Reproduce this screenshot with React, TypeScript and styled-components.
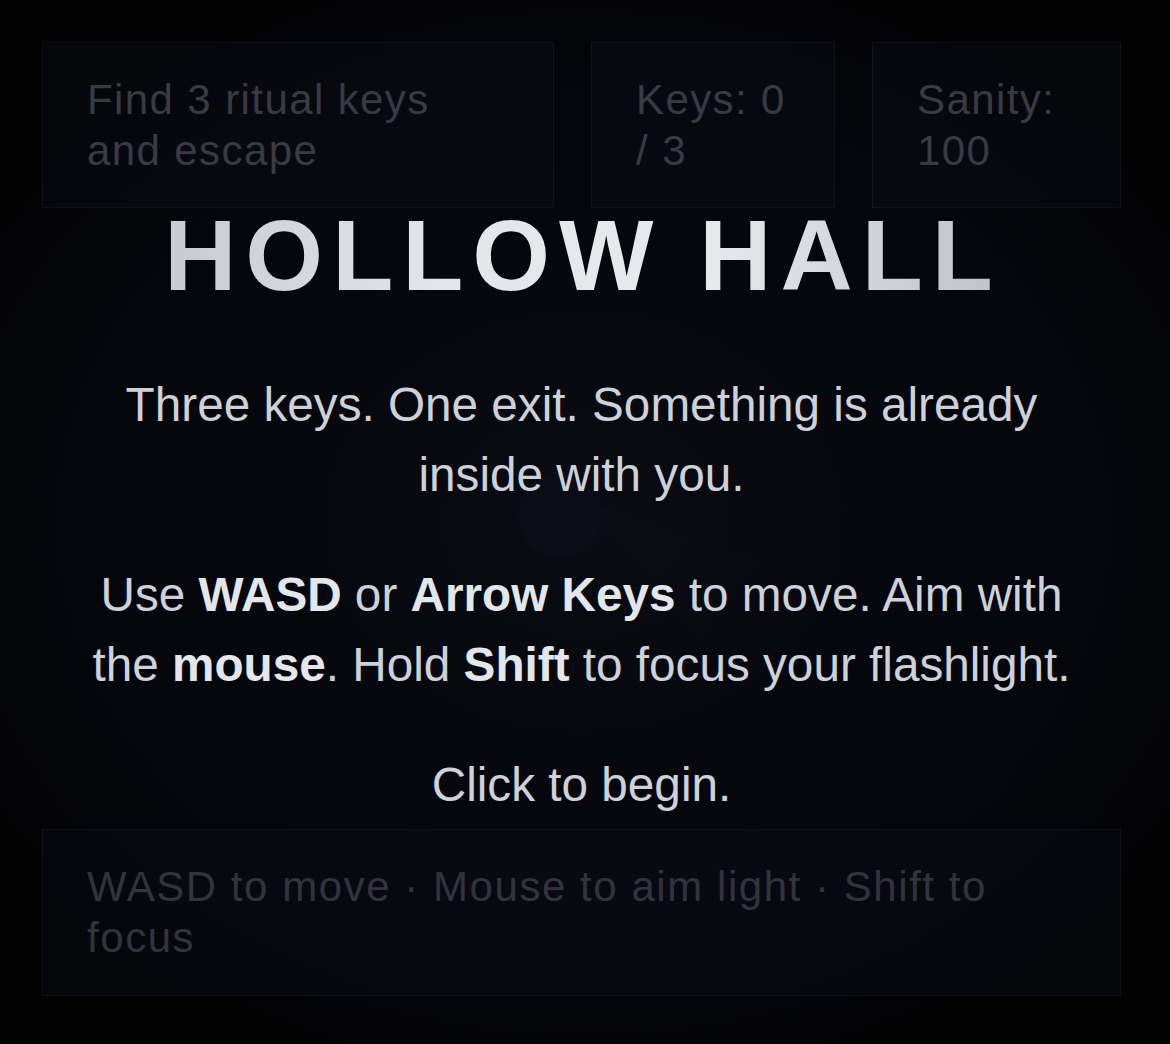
import styled, { createGlobalStyle } from 'styled-components';

const GlobalStyle = createGlobalStyle`
  html, body {
    margin: 0;
    padding: 0;
    background: #040509;
  }
  body {
    font-family: "Liberation Sans", Arial, sans-serif;
  }
`;

const Stage = styled.div`
  position: relative;
  width: 1170px;
  height: 1044px;
  box-sizing: border-box;
  padding: 42px 49px 48px 42px;
  display: flex;
  flex-direction: column;
  justify-content: space-between;
  overflow: hidden;
  background:
    radial-gradient(ellipse 60% 55% at 50% 50%, #0a0c13 0%, #06070d 55%, #040509 85%, #020203 100%);
`;

const Scene = styled.svg`
  position: absolute;
  inset: 0;
  pointer-events: none;
`;

const TopBar = styled.div`
  display: grid;
  grid-template-columns: 512px 244px 249px;
  gap: 37px;
`;

const Panel = styled.div`
  box-sizing: border-box;
  border: 1px solid rgba(150, 160, 190, 0.07);
  background: rgba(12, 15, 24, 0.4);
  padding: 31px 44px;
  font-size: 42px;
  line-height: 51px;
  letter-spacing: 1.4px;
  color: #383b43;
`;

const BottomPanel = styled(Panel)`
  width: 1079px;
  height: 167px;
  letter-spacing: 1.55px;
  color: #31343c;
`;

const Overlay = styled.div`
  position: absolute;
  inset: 0;
  padding: 0 49px 27px 42px;
  display: flex;
  flex-direction: column;
  align-items: center;
  justify-content: center;
  text-align: center;
`;

const Title = styled.h1`
  margin: 0 0 57px;
  font-size: 100px;
  line-height: 115px;
  font-weight: 700;
  letter-spacing: 9px;
  padding-left: 3px;
  background: linear-gradient(90deg, #c8cacf 0%, #e4e6ea 35%, #e7e9ed 65%, #c0c2c7 100%);
  -webkit-background-clip: text;
  background-clip: text;
  color: transparent;
`;

const Text = styled.p<{ $gap?: number }>`
  margin: 0 0 ${(p) => p.$gap ?? 50}px;
  max-width: 1010px;
  font-size: 47.7px;
  line-height: 70px;
  color: #cdd1d9;

  b {
    color: #e3e6eb;
    font-weight: 700;
  }
`;

export default function App() {
  return (
    <>
      <GlobalStyle />
      <Stage>
        <Scene width="1170" height="1044" viewBox="0 0 1170 1044">
          <circle cx="560" cy="515" r="42" fill="rgba(120,140,180,0.02)" />
          <path d="M585 500 L760 560 L700 640 Z" fill="rgba(120,140,180,0.012)" />
        </Scene>
        <TopBar>
          <Panel>Find 3 ritual keys and escape</Panel>
          <Panel>Keys: 0 / 3</Panel>
          <Panel>Sanity: 100</Panel>
        </TopBar>
        <BottomPanel>WASD to move · Mouse to aim light · Shift to focus</BottomPanel>
        <Overlay>
          <Title>HOLLOW HALL</Title>
          <Text>Three keys. One exit. Something is already inside with you.</Text>
          <Text>
            Use <b>WASD</b> or <b>Arrow Keys</b> to move. Aim with the <b>mouse</b>. Hold{' '}
            <b>Shift</b> to focus your flashlight.
          </Text>
          <Text $gap={0}>Click to begin.</Text>
        </Overlay>
      </Stage>
    </>
  );
}
